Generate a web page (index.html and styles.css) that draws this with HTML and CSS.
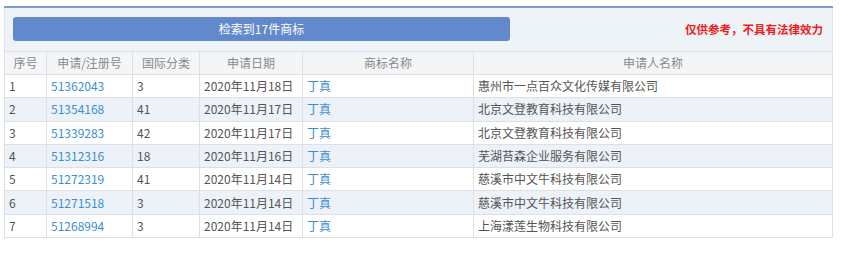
FILE: index.html
```html
<!DOCTYPE html>
<html lang="zh-CN">
<head>
<meta charset="utf-8">
<title>商标检索结果</title>
<link rel="stylesheet" href="styles.css">
</head>
<body>
<div class="panel">
  <div class="toolbar">
    <div class="count-btn">检索到17件商标</div>
    <div class="notice">仅供参考，不具有法律效力</div>
  </div>
  <table class="result">
    <colgroup>
      <col class="c-no"><col class="c-reg"><col class="c-cls"><col class="c-date"><col class="c-name"><col class="c-app">
    </colgroup>
    <thead>
      <tr><th>序号</th><th>申请/注册号</th><th>国际分类</th><th>申请日期</th><th>商标名称</th><th>申请人名称</th></tr>
    </thead>
    <tbody>
      <tr><td>1</td><td class="link">51362043</td><td>3</td><td>2020年11月18日</td><td class="link">丁真</td><td>惠州市一点百众文化传媒有限公司</td></tr>
      <tr><td>2</td><td class="link">51354168</td><td>41</td><td>2020年11月17日</td><td class="link">丁真</td><td>北京文登教育科技有限公司</td></tr>
      <tr><td>3</td><td class="link">51339283</td><td>42</td><td>2020年11月17日</td><td class="link">丁真</td><td>北京文登教育科技有限公司</td></tr>
      <tr><td>4</td><td class="link">51312316</td><td>18</td><td>2020年11月16日</td><td class="link">丁真</td><td>芜湖苔森企业服务有限公司</td></tr>
      <tr><td>5</td><td class="link">51272319</td><td>41</td><td>2020年11月14日</td><td class="link">丁真</td><td>慈溪市中文牛科技有限公司</td></tr>
      <tr><td>6</td><td class="link">51271518</td><td>3</td><td>2020年11月14日</td><td class="link">丁真</td><td>慈溪市中文牛科技有限公司</td></tr>
      <tr><td>7</td><td class="link">51268994</td><td>3</td><td>2020年11月14日</td><td class="link">丁真</td><td>上海漾莲生物科技有限公司</td></tr>
    </tbody>
  </table>
</div>
</body>
</html>
```
FILE: styles.css
```css
html, body {
  margin: 0;
  padding: 0;
  background: #ffffff;
}
body {
  font-family: "Noto Sans CJK SC", "Noto Sans", sans-serif;
  font-size: 12px;
  color: #555555;
}
.panel {
  margin: 6px 0 0 4px;
  width: 829px;
  border-top: 2px solid #7d9bd6;
  box-sizing: border-box;
}
.toolbar {
  height: 43px;
  background: #eef3f8;
  border-left: 1px solid #e2e6ea;
  border-right: 1px solid #e2e6ea;
  display: flex;
  align-items: center;
  justify-content: space-between;
  padding: 0 9px 0 8px;
  box-sizing: border-box;
}
.count-btn {
  width: 497px;
  height: 24px;
  margin-top: -2px;
  background: #6389cd;
  border-radius: 3px;
  color: #ffffff;
  display: flex;
  align-items: center;
  justify-content: center;
  font-size: 12px;
}
.notice {
  color: #f01c1c;
  font-weight: bold;
  font-size: 11.5px;
  margin-top: -2px;
}
.result {
  width: 829px;
  border-collapse: collapse;
  table-layout: fixed;
}
.c-no { width: 42px; }
.c-reg { width: 86px; }
.c-cls { width: 67px; }
.c-date { width: 103px; }
.c-name { width: 171px; }
.c-app { width: auto; }
.result th, .result td {
  border: 1px solid #dcdfe3;
  padding: 0 0 0 4px;
  line-height: 20px;
  white-space: nowrap;
  overflow: hidden;
}
.result th {
  height: 22px;
  background: #f4f5f7;
  color: #8a8a8a;
  font-weight: normal;
  text-align: center;
  padding: 0;
}
.result td {
  height: 22.3px;
}
.result tbody tr:nth-child(odd) td { background: #ffffff; }
.result tbody tr:nth-child(even) td { background: #ecf2f8; }
.result td.link { color: #3b8fd0; }
```
